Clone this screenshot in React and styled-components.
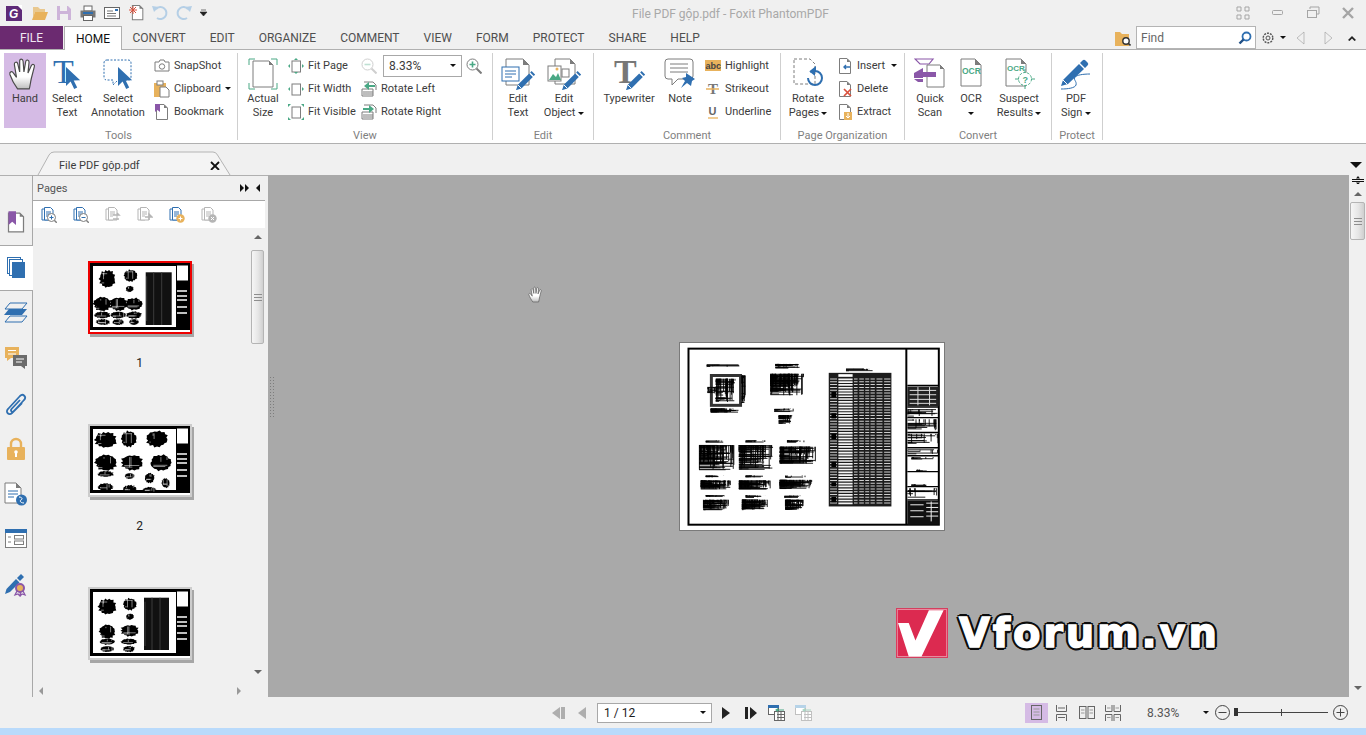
import React from 'react';
import styled, { createGlobalStyle } from 'styled-components';

const BLUE = '#2f6fb0';
const GREY = '#7d7d7d';
const ORANGE = '#e8b25c';
const PURPLE = '#8a57a8';
const GREEN = '#4aa885';

const GlobalStyle = createGlobalStyle`
  html, body {
    margin: 0;
    width: 1366px;
    height: 735px;
    overflow: hidden;
    background: #f0f0f0;
  }
  body {
    color: #3c3c3c;
    font-family: Roboto, "Liberation Sans", sans-serif;
    font-size: 11px;
  }
  * { box-sizing: border-box; }
  svg { display: block; flex: none; }
`;

const Window = styled.div`
  display: flex;
  flex-direction: column;
  height: 735px;
  overflow: hidden;
`;

const TitleBar = styled.div`
  align-items: center;
  display: flex;
  flex: 0 0 26px;
`;

const Qat = styled.div`
  align-items: center;
  display: flex;
  flex: 0 0 632px;
  gap: 8px;
  padding-left: 6px;
`;

const Title = styled.div`
  color: #a8a8a8;
  font-size: 12px;
  padding-top: 1px;
`;

const WinControls = styled.div`
  align-items: center;
  display: flex;
  gap: 21px;
  margin-left: auto;
  padding-right: 11px;
`;

const Slot = styled.div`
  align-items: center;
  display: flex;
  flex: none;
  margin-left: ${p => p.$ml || 0}px;
`;

const TabRow = styled.div`
  align-items: flex-start;
  display: flex;
  flex: 0 0 23px;
  font-size: 12px;
  min-height: 0;
  position: relative;
  z-index: 2;
`;

const FileTab = styled.div`
  align-items: center;
  background: #6b2a70;
  color: #f0e6f2;
  display: flex;
  height: 23px;
  justify-content: center;
  width: 63px;
`;

const HomeTab = styled.div`
  align-items: center;
  background: #fff;
  border: 1px solid #b0b0b0;
  border-bottom: 0;
  color: #111;
  display: flex;
  height: 24px;
  justify-content: center;
  margin-left: 1px;
  margin-right: -1.5px;
  width: 58px;
`;

const Tab = styled.div`
  align-items: center;
  color: #4f4f4f;
  display: flex;
  height: 23px;
  padding: 0 12px;
`;

const TabTools = styled.div`
  align-items: center;
  display: flex;
  height: 23px;
  margin-left: auto;
  padding-right: 9px;
`;

const FindBox = styled.div`
  align-items: center;
  background: #fff;
  border: 1px solid #b4b4b4;
  color: #666;
  display: flex;
  height: 23px;
  justify-content: space-between;
  margin-left: 5px;
  padding: 0 3px 0 4px;
  width: 120px;
`;

const Ribbon = styled.div`
  background: #fff;
  border-bottom: 1px solid #b0b0b0;
  border-top: 1px solid #b0b0b0;
  display: flex;
  flex: 0 0 95px;
  padding-top: 3px;
`;

const Group = styled.div`
  border-right: 1px solid #cfcfcf;
  display: flex;
  flex-direction: column;
  height: 87px;
  width: ${p => p.$w}px;
`;

const GroupBody = styled.div`
  display: flex;
  height: 75px;
  padding-left: ${p => p.$pad || 0}px;
`;

const GroupLabel = styled.div`
  color: #7f7f7f;
  height: 12px;
  line-height: 16px;
  text-align: center;
`;

const BigButton = styled.div`
  align-items: center;
  background: ${p => (p.$active ? '#d5bbe5' : 'transparent')};
  display: flex;
  flex: none;
  flex-direction: column;
  height: 75px;
  padding-top: 3px;
  width: ${p => p.$w}px;
`;

const BigLabel = styled.div`
  line-height: 14px;
  text-align: center;
  white-space: nowrap;
`;

const IconSlot = styled.div`
  align-items: center;
  display: flex;
  height: 36px;
  justify-content: center;
`;

// the big serif T needs room above its letter for the font's ascent
const TallIcon = styled.div`
  margin-top: -6px;
`;

const SmallCol = styled.div`
  display: flex;
  flex: none;
  flex-direction: column;
  margin-left: ${p => p.$ml || 0}px;
  padding-top: 1px;
  width: ${p => (p.$w ? `${p.$w}px` : 'auto')};
`;

const SmallRow = styled.div`
  align-items: center;
  display: flex;
  gap: 4px;
  height: 23px;
  white-space: nowrap;
`;

const Caret = styled.span`
  border-left: ${p => p.$s || 3}px solid transparent;
  border-right: ${p => p.$s || 3}px solid transparent;
  border-top: ${p => p.$s || 3}px solid ${p => p.$color || '#111'};
  display: inline-block;
  flex: none;
  margin-left: ${p => p.$ml || 0}px;
  vertical-align: middle;
`;

const ZoomCombo = styled.div`
  align-items: center;
  border: 1px solid #a8a8a8;
  display: flex;
  font-size: 12px;
  height: 22px;
  justify-content: space-between;
  margin-left: 2px;
  padding: 0 5px;
  width: 79px;
`;

const DocBand = styled.div`
  display: flex;
  flex: 0 0 31px;
  padding-left: 37px;
`;

const DocTab = styled.div`
  align-items: center;
  display: flex;
  height: 24px;
  justify-content: space-between;
  margin-top: 7px;
  padding: 4px 11px 0 22px;
  position: relative;
  width: 194px;
`;

const DocTabShape = styled.svg`
  left: 0;
  position: absolute;
  top: 0;
`;

const DocTabText = styled.span`
  position: relative;
`;

const BandCaret = styled.div`
  margin-left: auto;
  padding: 14px 4px 0 0;
`;

const Main = styled.div`
  display: flex;
  flex: 0 0 522px;
  min-height: 0;
  overflow: hidden;
`;

const Rail = styled.div`
  border-right: 1px solid #a8a8a8;
  border-top: 1px solid #b0b0b0;
  flex: 0 0 33px;
  padding-top: 24px;
`;

const RailItem = styled.div`
  align-items: center;
  background: ${p => (p.$active ? '#fff' : 'transparent')};
  border-bottom: 1px solid ${p => (p.$active ? '#a8a8a8' : 'transparent')};
  border-top: 1px solid ${p => (p.$active ? '#a8a8a8' : 'transparent')};
  display: flex;
  height: 45.25px;
  justify-content: center;
  margin-right: ${p => (p.$active ? -1 : 0)}px;
  position: relative;
`;

const Panel = styled.div`
  border-top: 1px solid #b0b0b0;
  display: flex;
  flex: 0 0 235px;
  flex-direction: column;
  min-height: 0;
  padding-right: 3px;
`;

const PanelHeader = styled.div`
  align-items: center;
  color: #555;
  display: flex;
  flex: 0 0 24px;
  padding: 0 5px 0 4px;
`;

const HeaderArrows = styled.div`
  align-items: center;
  display: flex;
  gap: 7px;
  margin-left: auto;
`;

const PanelToolbar = styled.div`
  align-items: center;
  background: #fff;
  border-top: 1px solid #a8a8a8;
  display: flex;
  flex: 0 0 28px;
  gap: 16px;
  padding-left: 8px;
`;

const PanelBody = styled.div`
  display: flex;
  flex: 1;
  min-height: 0;
`;

const ThumbList = styled.div`
  align-items: center;
  display: flex;
  flex: 1;
  flex-direction: column;
  min-height: 0;
  overflow: hidden;
  padding: 33px 4px 0 0;
`;

const ThumbItem = styled.div`
  align-items: center;
  display: flex;
  flex: 0 0 163px;
  flex-direction: column;
`;

const ThumbFrame = styled.div`
  background: #fff;
  border: 2px solid ${p => (p.$selected ? '#ee0000' : '#cccccc')};
  box-shadow: 2px 3px 0 #a6a6a6;
  height: 73px;
  width: 104px;
`;

const ThumbLabel = styled.div`
  color: #222;
  font-size: 12px;
  line-height: 14px;
  margin-top: 22px;
`;

const VScroll = styled.div`
  background: #f0f0f0;
  display: flex;
  flex: 0 0 ${p => p.$w}px;
  flex-direction: column;
  padding-bottom: ${p => p.$bottom || 0}px;
`;

const ScrollCell = styled.div`
  align-items: center;
  display: flex;
  flex: 0 0 ${p => p.$h || 18}px;
  justify-content: center;
  margin-top: ${p => (p.$end ? 'auto' : '0')};
`;

const ScrollThumb = styled.div`
  align-items: center;
  background: linear-gradient(90deg, #f6f6f6 0%, #e6e6e6 55%, #cfcfcf 100%);
  border: 1px solid #b4b4b4;
  border-radius: 2px;
  display: flex;
  height: ${p => p.$h}px;
  justify-content: center;
  margin: ${p => p.$top}px 1px 0;
`;

const Grip = styled.div`
  background: #8e8e8e;
  box-shadow: 0 3px #8e8e8e, 0 -3px #8e8e8e;
  height: 1px;
  width: 8px;
`;

const HScroll = styled.div`
  align-items: center;
  display: flex;
  flex: 0 0 13px;
  justify-content: space-between;
  padding: 0 24px 0 6px;
`;

const Canvas = styled.div`
  align-items: center;
  background: #a9a9a9;
  display: flex;
  flex: 0 0 1081px;
  justify-content: center;
  padding-left: 7px;
  position: relative;
`;

const Sheet = styled.div`
  background: #fff;
  box-shadow: 0 0 0 1px #7a7a7a;
  height: 187px;
  width: 264px;
`;

const SplitDots = styled.div`
  background-image: radial-gradient(#7d7d7d 0.7px, transparent 0.8px);
  background-size: 3px 3px;
  height: 42px;
  left: 1px;
  position: absolute;
  top: 201px;
  width: 6px;
`;

const CursorSpot = styled.div`
  left: 260px;
  position: absolute;
  top: 111px;
`;

const Watermark = styled.div`
  align-items: center;
  display: flex;
  gap: 11px;
  left: 628px;
  position: absolute;
  top: 433px;
`;

const WatermarkText = styled.div`
  -webkit-text-stroke: 1.4px #fff;
  color: #fff;
  font-family: "DejaVu Sans", sans-serif;
  font-size: 40px;
  font-weight: 700;
  letter-spacing: 2.8px;
  line-height: 44px;
  text-shadow:
    3px 0 0 #0c0c0c, -3px 0 0 #0c0c0c, 0 3px 0 #0c0c0c, 0 -3px 0 #0c0c0c,
    2px 2px 0 #0c0c0c, -2px 2px 0 #0c0c0c, 2px -2px 0 #0c0c0c, -2px -2px 0 #0c0c0c;
`;

const StatusBar = styled.div`
  align-items: center;
  display: flex;
  flex: 0 0 31px;
  padding: 0 18px 0 552px;
`;

const PageCombo = styled.div`
  align-items: center;
  background: #fff;
  border: 1px solid #a8a8a8;
  color: #1c1c1c;
  display: flex;
  font-size: 12px;
  height: 20px;
  justify-content: space-between;
  margin-left: 10px;
  padding: 0 5px 0 6px;
  width: 115px;
`;

const StatusRight = styled.div`
  align-items: center;
  display: flex;
  margin-left: auto;
`;

const ViewModes = styled.div`
  display: flex;
  gap: 2.3px;
`;

const ViewMode = styled.div`
  align-items: center;
  background: ${p => (p.$active ? '#d5bbe5' : 'transparent')};
  display: flex;
  height: 20px;
  justify-content: center;
  width: 23px;
`;

const ZoomValue = styled.div`
  color: #555;
  font-size: 12px;
  margin-left: 23px;
  width: 56px;
`;

const Slider = styled.div`
  background: #444;
  height: 1px;
  margin: 0 5px 0 4px;
  position: relative;
  width: 94px;
`;

const SliderHandle = styled.div`
  background: #333;
  height: 8px;
  left: 0;
  position: absolute;
  top: -4px;
  width: 4px;
`;

const SliderTick = styled.div`
  background: #444;
  height: 7px;
  left: 47px;
  position: absolute;
  top: -3px;
  width: 1px;
`;

const AccentBar = styled.div`
  background: #b9dafb;
  flex: 0 0 7px;
`;

/* ---------- icon helpers ---------- */

const Svg = ({ w = 16, h, vb, children }) => (
  <svg width={w} height={h || w} viewBox={vb || `0 0 ${w} ${h || w}`} fill="none">
    {children}
  </svg>
);

// document with a folded corner, in a 16 wide, 16 high box
const Doc = ({ x = 0, y = 0, s = 1, stroke = GREY, fold = GREY, fill = '#fff', dash }) => (
  <g transform={`translate(${x} ${y}) scale(${s})`}>
    <path
      d="M2.5 .5h7.5l3.5 3.5v11.5h-11z"
      fill={fill}
      stroke={stroke}
      strokeWidth={1 / s}
      strokeDasharray={dash}
    />
    <path d="M10 .5l3.5 3.5h-3.5z" fill={fold} />
  </g>
);

const Pencil = ({ x, y, s = 1, color = BLUE }) => (
  <g transform={`translate(${x} ${y}) scale(${s})`}>
    <path d="M0 16l1.5-4.5 9.5-9.5 3 3-9.5 9.5z" fill={color} />
    <path d="M11.8 1.2l1.2-1.2 3 3-1.2 1.2z" fill={color} />
    <path d="M1.5 11.5l3 3" stroke="#fff" strokeWidth=".8" />
  </g>
);

const Arrow = ({ x, y, s = 1, color = BLUE }) => (
  <path
    transform={`translate(${x} ${y}) scale(${s})`}
    d="M0 0v19l4.6-4.6 3.6 7.6 3-1.6-3.5-7 6.5-.2z"
    fill={color}
  />
);

const HandIcon = ({ size = 34, grad = 'hand' }) => (
  <Svg w={size} vb="0 0 32 32">
    <defs>
      <linearGradient id={grad} x1="0" y1="0" x2="0" y2="1">
        <stop offset="0" stopColor="#fff" />
        <stop offset=".6" stopColor="#fff" />
        <stop offset="1" stopColor="#bdbdbd" />
      </linearGradient>
    </defs>
    <path
      d="M9 30C6 26 3 20 1.800 16.500 1 13.800 3.800 13 5 15l3 4.200L6 7.200C5.600 4.600 8.600 4 9.200 6.500L11 14V4c0-2.600 3-2.600 3.200 0L15 14l1.600-9.500c.5-2.500 3.400-2 3.200.5l-1 10 3.200-7c1-2 3.500-1 2.800 1L22 20c-1 4-1 7-2 10z"
      fill={`url(#${grad})`}
      stroke="#4a4a4a"
      strokeWidth="1.100"
    />
  </Svg>
);

const SelectTextIcon = () => (
  <TallIcon>
    <Svg w={30} h={38} vb="0 -6 30 38">
      <text x="1" y="25" fontFamily="Liberation Serif" fontSize="34" fill={BLUE}>T</text>
      <Arrow x={14} y={9} />
    </Svg>
  </TallIcon>
);

const SelectAnnotIcon = () => (
  <Svg w={30} h={32}>
    <path
      d="M4 2h21q3 0 3 3v14q0 3-3 3H15l-5 5v-5H4q-3 0-3-3V5q0-3 3-3z"
      stroke={BLUE}
      strokeDasharray="2 1.500"
    />
    <Arrow x={15} y={9} />
  </Svg>
);

const ActualSizeIcon = () => (
  <Svg w={30} h={32}>
    <path d="M1 7V1h6M23 1h6v6M1 25v6h6M23 31h6v-6" stroke={GREEN} />
    <path d="M5 3h16l4 4v22H5z" fill="#fff" stroke={GREY} />
    <path d="M21 3l4 4h-4z" fill={GREY} />
  </Svg>
);

const EditTextIcon = () => (
  <Svg w={34} h={32}>
    <path d="M5 1h17l6 6v20H5z" fill="#fff" stroke={GREY} />
    <path d="M22 1l6 6h-6z" fill={GREY} />
    <rect x="1" y="9" width="17" height="14" fill="#fff" stroke={BLUE} />
    <path d="M4 13h11M4 16h11M4 19h7" stroke={BLUE} />
    <Pencil x={15} y={13} s={1.200} />
  </Svg>
);

const EditObjectIcon = () => (
  <Svg w={34} h={32}>
    <path d="M8 1h15l5 5v20H8z" fill="#fff" stroke={GREY} />
    <path d="M23 1l5 5h-5z" fill={GREY} />
    <rect x="1" y="8" width="13" height="15" fill="#fff" stroke={GREY} />
    <path d="M2 22l4-6 3 3 2-4 3 7z" fill={GREEN} />
    <circle cx="10" cy="11" r="1.500" fill={ORANGE} />
    <rect x="15" y="11" width="7" height="8" fill="#fff" stroke={GREY} />
    <Pencil x={15} y={13} s={1.200} />
  </Svg>
);

const TypewriterIcon = () => (
  <TallIcon>
    <Svg w={32} h={38} vb="0 -6 32 38">
      <text x="1" y="25" fontFamily="Liberation Serif" fontWeight="700" fontSize="34" fill="#777">T</text>
      <Pencil x={13} y={13} s={1.200} />
    </Svg>
  </TallIcon>
);

const NoteIcon = () => (
  <Svg w={32} h={32}>
    <path d="M4 1h22q3 0 3 3v14q0 3-3 3H14l-6 6v-6H4q-3 0-3-3V4q0-3 3-3z" fill="#fff" stroke={GREY} />
    <path d="M6 6h18M6 10h18M6 14h18" stroke={GREY} />
    <path d="M22 15l9 6-3 2-1 5-4-3-6 5 4-7-3-3 4-1z" fill={BLUE} />
  </Svg>
);

const RotatePagesIcon = () => (
  <Svg w={32} h={32}>
    <path d="M2 1h16l5 5v20H2z" stroke={GREY} strokeDasharray="3 2" />
    <path d="M18 14l5-4v3a7 7 0 1 1-7 7" stroke={BLUE} strokeWidth="2" />
    <path d="M18 14l5 4v-8z" fill={BLUE} />
  </Svg>
);

const QuickScanIcon = () => (
  <Svg w={32} h={32}>
    <path d="M1 1h18l-4 5H6z" stroke={PURPLE} strokeWidth="1.200" />
    <path d="M13 7h13l4 4v18H13z" fill="#fff" stroke={GREY} />
    <path d="M26 7l4 4h-4z" fill={GREY} />
    <path d="M9 10L0 15v5h9z" fill={PURPLE} />
    <rect x="9" y="14" width="13" height="5" fill={PURPLE} />
    <path d="M0 21h9v3H4z" fill={PURPLE} />
  </Svg>
);

const OcrIcon = () => (
  <Svg w={24} h={32}>
    <path d="M2 1h14l6 6v21H2z" fill="#fff" stroke={GREY} />
    <path d="M16 1l6 6h-6z" fill={GREY} />
    <text x="3" y="16" fontFamily="Liberation Sans" fontWeight="700" fontSize="8.500" fill={GREEN}>OCR</text>
  </Svg>
);

const SuspectIcon = () => (
  <Svg w={34} h={32}>
    <path d="M4 1h15l5 5v22H4z" fill="#fff" stroke={GREY} />
    <path d="M19 1l5 5h-5z" fill={GREY} />
    <text x="5" y="13" fontFamily="Liberation Sans" fontWeight="700" fontSize="8" fill={GREEN}>OCR</text>
    <circle cx="23" cy="21" r="6.500" fill="#fff" stroke={GREEN} strokeDasharray="2.500 1.500" />
    <path d="M23 11v4M23 27v4M13 21h4M29 21h4" stroke={GREEN} />
    <text x="20.500" y="24.500" fontFamily="Liberation Sans" fontWeight="700" fontSize="9" fill={GREEN}>?</text>
  </Svg>
);

const PdfSignIcon = () => (
  <Svg w={32} h={32}>
    <path d="M1 28l2-6L19 6l5 5L8 26z" fill={BLUE} />
    <path d="M20 5l2.500-2.500a2 2 0 0 1 3 0l2 2a2 2 0 0 1 0 3L25 10z" fill={BLUE} />
    <path d="M3 22l4 4" stroke="#fff" />
    <path d="M1 31c7 0 14-1 15-4 1-4-3-5-1-8 2-2 8-3 15-3" stroke={BLUE} />
  </Svg>
);

const SnapShotIcon = () => (
  <Svg>
    <path d="M1 4h4l1-2h4l1 2h4v9H1z" fill="#fff" stroke={GREY} />
    <circle cx="8" cy="8.500" r="2.700" stroke={GREY} />
  </Svg>
);

const ClipboardIcon = () => (
  <Svg w={16} h={18}>
    <path d="M0 3h12v14H0z" fill={ORANGE} />
    <rect x="3" y="1" width="6" height="4" fill="#fff" stroke={GREY} />
    <path d="M6 7h6l3 3v7H6z" fill="#fff" stroke={GREY} />
  </Svg>
);

const BookmarkIcon = () => (
  <Svg>
    <Doc />
    <path d="M1 0h5v8l-2.500-2L1 8z" fill={PURPLE} />
  </Svg>
);

const FitIcon = ({ kind }) => (
  <Svg>
    <rect x="4" y="3" width="8.500" height="11" fill="#fff" stroke={GREY} />
    {kind === 'page' && <path d="M8 0l2 2H6zM8 16l2-2H6zM0 8l2-2v4zM16 8l-2-2v4z" fill={GREEN} />}
    {kind === 'width' && <path d="M0 8l2-2v4zM16 8l-2-2v4z" fill={GREEN} />}
    {kind === 'visible' && <path d="M0 0h3L0 3zM16 0h-3l3 3zM0 16h3l-3-3zM16 16h-3l3-3z" fill={GREEN} />}
  </Svg>
);

const ZoomIcon = ({ sign, pale }) => {
  const lens = pale ? '#cfcfcf' : GREY;
  const mark = pale ? '#bfe0d3' : GREEN;
  return (
    <Svg>
      <circle cx="6.500" cy="6.500" r="5.500" fill="#fff" stroke={lens} />
      <path d="M10.500 10.500L15.500 15.500" stroke={lens} strokeWidth="2" />
      <path d={sign === '+' ? 'M3.500 6.500h6M6.500 3.500v6' : 'M3.500 6.500h6'} stroke={mark} strokeWidth="1.600" />
    </Svg>
  );
};

const RotateIcon = ({ flip }) => (
  <Svg>
    <path d="M3 1h9l3 3v5M1 8h11v7H1z" fill="#fff" stroke={GREY} />
    <path d="M3 10v4M5 10v4M7 10v4M9 10v4M11 10v4" stroke={GREY} />
    <path d={flip ? 'M2 4h6V1l5 4-5 4V6H2z' : 'M14 4H8V1L3 5l5 4V6h6z'} fill={GREEN} />
  </Svg>
);

const HighlightIcon = () => (
  <Svg>
    <rect y="2" width="16" height="11" fill={ORANGE} />
    <text x=".5" y="11" fontFamily="Liberation Sans" fontWeight="700" fontSize="9" fill="#444">abc</text>
  </Svg>
);

const StrikeoutIcon = () => (
  <Svg>
    <text x="3" y="13" fontFamily="Liberation Serif" fontWeight="700" fontSize="15" fill="#777">T</text>
    <path d="M1 8h13" stroke={ORANGE} strokeWidth="1.500" />
  </Svg>
);

const UnderlineIcon = () => (
  <Svg>
    <text x="3.500" y="11" fontFamily="Liberation Sans" fontWeight="700" fontSize="11" fill="#666">U</text>
    <path d="M3 14h10" stroke={ORANGE} strokeWidth="1.300" />
  </Svg>
);

const InsertIcon = () => (
  <Svg>
    <Doc />
    <path d="M13 9H7M9 7l-2 2 2 2" stroke={BLUE} strokeWidth="1.400" />
  </Svg>
);

const DeleteIcon = () => (
  <Svg>
    <Doc />
    <path d="M7 8l7 7M14 8l-7 7" stroke="#d9503c" strokeWidth="1.700" />
  </Svg>
);

const ExtractIcon = () => (
  <Svg>
    <Doc />
    <rect x="7" y="8" width="8" height="8" fill={ORANGE} />
    <path d="M11 9v5M9 12l2 2 2-2" stroke="#fff" />
  </Svg>
);

const CollapseIcon = () => (
  <Svg w={10} h={8}>
    <path d="M1 6l4-4 4 4-1.500 1L5 4.500 2.500 7z" fill="#222" />
  </Svg>
);

const GearIcon = () => (
  <Svg w={14}>
    <circle cx="7" cy="7" r="4.800" stroke="#555" strokeWidth="1.400" strokeDasharray="2 1" />
    <circle cx="7" cy="7" r="2" stroke="#555" />
  </Svg>
);

const FindFolderIcon = () => (
  <Svg>
    <path d="M0 2h5l2 2h7v12H0z" fill={ORANGE} />
    <circle cx="11" cy="11" r="3.200" fill="#fff" stroke="#333" strokeWidth="1.400" />
    <path d="M13.500 13.500l2 2" stroke="#333" strokeWidth="1.600" />
  </Svg>
);

const FindLens = () => (
  <Svg w={14}>
    <circle cx="8.500" cy="5.500" r="4" stroke={BLUE} strokeWidth="1.800" />
    <path d="M5.500 8.500L1.500 12.500" stroke="#1f4f86" strokeWidth="2.400" />
  </Svg>
);

const Triangle = ({ dir, w = 9, h = 14, color = '#c8c8c8' }) => (
  <Svg w={w} h={h}>
    <path
      d={dir === 'left' ? `M${w - 1} 1L1 ${h / 2}l${w - 2} ${h / 2 - 1}z` : `M1 1l${w - 2} ${h / 2 - 1}L1 ${h - 1}z`}
      fill={color}
      stroke="#9a9a9a"
      strokeWidth=".6"
    />
  </Svg>
);

const TinyArrow = ({ dir, color = '#666', s = 3 }) => {
  const pts = {
    up: `M0 ${s}h${s * 2}L${s} 0z`,
    down: `M0 0h${s * 2}L${s} ${s}z`,
    left: `M${s} 0v${s * 2}L0 ${s}z`,
    right: `M0 0v${s * 2}L${s} ${s}z`,
  };
  const vertical = dir === 'up' || dir === 'down';
  return (
    <Svg w={vertical ? s * 2 : s} h={vertical ? s : s * 2}>
      <path d={pts[dir]} fill={color} />
    </Svg>
  );
};

const DocStack = ({ stroke = BLUE, children }) => (
  <Svg>
    <path d="M1 2h7v11H1z" fill="#fff" stroke={stroke} />
    <path d="M3.500 .5h6l2.500 2.500v10H3.500z" fill="#fff" stroke={stroke} />
    <path d="M5 5h5M5 7h5M5 9h3" stroke={stroke} />
    {children}
  </Svg>
);

const ZoomBadge = ({ sign }) => (
  <g>
    <circle cx="10.500" cy="10.500" r="4" fill="#fff" stroke={GREY} />
    <path d="M13.500 13.500l2.300 2.300" stroke={GREY} strokeWidth="1.400" />
    <path d={sign === '+' ? 'M8.500 10.500h4M10.500 8.500v4' : 'M8.500 10.500h4'} stroke={BLUE} />
  </g>
);

const CircleBadge = ({ color, x }) => (
  <g>
    <circle cx="11.500" cy="11.500" r="4.200" fill={color} />
    <path d={x ? 'M10 10l3 3M13 10l-3 3' : 'M9.500 11.500h4M11.500 9.500v4'} stroke="#fff" />
  </g>
);

/* ---------- rail icons ---------- */

const RailBookmark = () => (
  <Svg w={20} h={24} vb="0 0 16 19">
    <path d="M2 1.500h9l3 3v12H2z" fill="#fff" stroke={GREY} />
    <path d="M11 1.500l3 3h-3z" fill={GREY} />
    <path d="M2 0h6v11L5 8.500 2 11z" fill={PURPLE} />
  </Svg>
);

const RailPages = () => (
  <Svg w={20} h={22}>
    <rect x=".5" y=".5" width="13" height="16" fill="#fff" stroke={BLUE} />
    <rect x="2.500" y="2.500" width="13" height="16" fill="#fff" stroke={BLUE} />
    <rect x="5" y="5" width="13" height="16" fill={BLUE} />
  </Svg>
);

const RailLayers = () => (
  <Svg w={24} h={22}>
    <path d="M6 1h17l-5 6H1z" stroke={BLUE} />
    <path d="M5 7h18l-5 6H0z" fill={BLUE} />
    <path d="M6 14h17l-5 6H1z" stroke={BLUE} />
  </Svg>
);

const RailComments = () => (
  <Svg w={24} h={24}>
    <path d="M1 1h14v11H7l-4 3v-3H1z" fill={ORANGE} />
    <path d="M4 4.500h8M4 8h8" stroke="#fff" />
    <path d="M9 9h14v11h-2v3l-4-3H9z" fill="#6b6b6b" />
    <path d="M12 13h8M12 16h6" stroke="#fff" />
  </Svg>
);

const RailClip = () => (
  <Svg w={22} h={24}>
    <path
      d="M15 8L6.500 17C5 19 7.500 21 9 19L19 8C22 5 18 1 15 4L3 17C0 20 4 24 7 21L17 11"
      stroke={BLUE}
      strokeWidth="1.800"
    />
  </Svg>
);

const RailLock = () => (
  <Svg w={20} h={24}>
    <path d="M5 11V7a5 5 0 0 1 10 0v4" stroke={ORANGE} strokeWidth="2.400" />
    <rect x="1" y="10" width="18" height="13" rx="1" fill={ORANGE} />
    <circle cx="10" cy="15" r="1.800" fill="#fff" />
    <rect x="9" y="15" width="2" height="5" fill="#fff" />
  </Svg>
);

const RailDocGlobe = () => (
  <Svg w={24} h={24}>
    <path d="M1 1h11l5 5v15H1z" fill="#fff" stroke={GREY} />
    <path d="M12 1l5 5h-5z" fill={GREY} />
    <path d="M4 9h10M4 12h10M4 15h6" stroke={BLUE} />
    <circle cx="17.500" cy="18" r="5.500" fill={BLUE} />
    <path d="M15 15c3 0 4 2 2 3s0 3 3 3" stroke="#fff" />
  </Svg>
);

const RailForm = () => (
  <Svg w={22} h={20}>
    <rect x=".5" y=".5" width="21" height="18" fill="#fff" stroke={GREY} />
    <rect width="22" height="4" fill={BLUE} />
    <path d="M3 8h3M3 13h3" stroke={GREY} />
    <rect x="9.500" y="6.500" width="9" height="3.500" stroke={GREY} />
    <rect x="9.500" y="12" width="9" height="3.500" stroke={GREY} />
  </Svg>
);

const RailSign = () => (
  <Svg w={22} h={24}>
    <path d="M0 21l1.500-5L11 6l3.500 3.500L5 19z" fill={BLUE} />
    <path d="M12 5l4-4 3 3-4 4z" fill={BLUE} />
    <circle cx="15" cy="15" r="4" fill={ORANGE} stroke={PURPLE} strokeWidth="2" />
    <path d="M12 18l-2 4 3-1 2 2 .5-4M18 18l2 4-3-1-2 2" stroke={PURPLE} strokeWidth="1.300" />
  </Svg>
);

/* ---------- status bar icons ---------- */

const NavIcon = ({ kind, muted }) => {
  const fill = muted ? '#aeaeae' : '#222';
  const paths = {
    first: 'M0 7l8-6v12zM9 1h4v12H9z',
    prev: 'M1 7l8-6v12z',
    next: 'M1 1l8 6-8 6z',
    last: 'M0 1h3v12H0zM5 1l7 6-7 6z',
  };
  const width = { first: 14, prev: 10, next: 10, last: 13 }[kind];
  return (
    <Svg w={width} h={14}>
      <path d={paths[kind]} fill={fill} />
    </Svg>
  );
};

const TableArrowIcon = ({ muted }) => {
  const line = muted ? '#c0c0c0' : '#666';
  const head = muted ? '#b6d3e8' : BLUE;
  const arrow = muted ? '#a9d6c4' : GREEN;
  return (
    <Svg w={17} h={16}>
      <rect x=".5" y=".5" width="10" height="9" fill="#fff" stroke={line} />
      <rect width="11" height="3" fill={head} />
      <rect x="6.500" y="6.500" width="10" height="9" fill="#fff" stroke={line} />
      <path d="M9 9.500h7M9 12.500h7M10 7v8M13 7v8" stroke={line} />
      <path d="M10 3l-3 2 3 2zM10 4.500h6v1h-6z" fill={arrow} />
    </Svg>
  );
};

const SinglePageIcon = () => (
  <Svg w={12} h={15}>
    <rect x=".5" y=".5" width="10" height="14" stroke="#666" />
    <path d="M2.500 4h6M2.500 7h6M2.500 10h6" stroke="#999" />
  </Svg>
);

const ContinuousIcon = () => (
  <Svg w={12} h={16}>
    <path d="M.5 0v6.500h10V0M2 3h7" stroke="#666" />
    <path d="M.5 16V9.500h10V16M2 12.500h7" stroke="#666" />
  </Svg>
);

const FacingIcon = () => (
  <Svg w={16} h={13}>
    <rect x=".5" y=".5" width="6.500" height="12" stroke="#666" />
    <rect x="9" y=".5" width="6.500" height="12" stroke="#666" />
    <path d="M2 4h3.500M2 7h3.500M10.500 4h3.500M10.500 7h3.500" stroke="#999" />
  </Svg>
);

const ContFacingIcon = () => (
  <Svg w={16} h={16}>
    <path d="M.5 0v6.500h6.500V0M9 0v6.500h6.500V0M.5 16V9.500h6.500V16M9 16V9.500h6.500V16" stroke="#666" />
    <path d="M2 3h3.500M10.500 3h3.500M2 12.500h3.500M10.500 12.500h3.500" stroke="#999" />
  </Svg>
);

const RoundSign = ({ plus }) => (
  <Svg w={15}>
    <circle cx="7.500" cy="7.500" r="7" stroke="#444" />
    <path d={plus ? 'M3.500 7.500h8M7.500 3.500v8' : 'M3.500 7.500h8'} stroke="#444" />
  </Svg>
);

/* ---------- the drawings on the pages ---------- */

function makeRandom(seed) {
  let value = seed;
  return () => {
    value = (value * 16807) % 2147483647;
    return value / 2147483647;
  };
}

// many short lines in a box, reads as a tiny technical drawing
function scribble([x, y, w, h], seed, count = 30) {
  const rand = makeRandom(seed * 7919 + 11);
  let d = '';
  for (let i = 0; i < count; i++) {
    const px = x + rand() * w;
    const py = y + rand() * h;
    if (i % 2) d += `M${x} ${py.toFixed(1)}h${(rand() * w).toFixed(1)}`;
    else d += `M${px.toFixed(1)} ${y}v${(rand() * h).toFixed(1)}`;
  }
  return d;
}

function blob([cx, cy, rx, ry], seed) {
  const rand = makeRandom(seed * 4801 + 3);
  const pts = [];
  for (let i = 0; i < 28; i++) {
    const a = (i / 28) * Math.PI * 2;
    const k = i % 2 ? 0.82 + rand() * 0.14 : 0.92 + rand() * 0.2;
    pts.push(`${(cx + Math.cos(a) * rx * k).toFixed(1)},${(cy + Math.sin(a) * ry * k).toFixed(1)}`);
  }
  return pts.join(' ');
}

const MAIN_DRAWINGS = [
  [135, 130, 60, 70, 70], [110, 155, 30, 20, 24], [120, 220, 85, 12, 30], [213, 120, 12, 90, 24],
  [108, 88, 110, 6, 14], [300, 115, 100, 65, 130], [315, 85, 75, 14, 24], [325, 240, 40, 25, 48],
  [312, 220, 65, 10, 16], [85, 330, 105, 75, 110], [205, 330, 105, 75, 110], [328, 335, 108, 52, 100],
  [105, 316, 60, 6, 10], [225, 316, 60, 6, 10], [350, 316, 55, 6, 10], [90, 437, 90, 26, 80],
  [205, 437, 95, 26, 80], [328, 435, 98, 26, 70], [105, 422, 60, 6, 10], [225, 422, 60, 6, 10],
  [345, 422, 60, 6, 10], [98, 495, 76, 30, 80], [214, 495, 78, 30, 80], [345, 495, 55, 30, 70],
  [105, 482, 60, 6, 10], [225, 482, 60, 6, 10], [342, 482, 60, 6, 10], [528, 100, 85, 6, 12],
  [714, 222, 92, 24, 16], [714, 252, 92, 36, 24], [714, 296, 92, 34, 20], [714, 344, 92, 14, 10],
  [725, 366, 80, 6, 8], [740, 404, 40, 6, 6], [725, 448, 60, 6, 6], [714, 460, 92, 30, 18],
];

const TABLE_COLS = [[480, 501], [552, 563], [568, 582], [586, 598], [602, 615], [620, 638], [643, 662]];
const TABLE_ROWS = Array.from({ length: 45 }, (_, i) => 129 + i * 8.5);

const MainDrawing = () => (
  <svg width="264" height="187" viewBox="28 22 795 564">
    <rect x="53" y="39" width="755" height="531" fill="none" stroke="#000" strokeWidth="6" />
    <path d="M710 39v531" stroke="#000" strokeWidth="6" />
    <rect x="122" y="120" width="88" height="90" fill="none" stroke="#333" strokeWidth="9" />
    <path
      d={MAIN_DRAWINGS.map(([x, y, w, h, n], i) => scribble([x, y, w, h], i + 1, n)).join('')}
      stroke="#000"
      strokeWidth="2.600"
    />
    <rect x="476" y="112" width="189" height="403" fill="#1c1c1c" />
    <rect x="505" y="116" width="43" height="8" fill="#fff" />
    <path d={TABLE_ROWS.map(y => `M505 ${y}H548V${y + 5}H505z`).join('')} fill="#f2f2f2" />
    <path
      d={TABLE_ROWS.flatMap(y => TABLE_COLS.map(([a, b]) => `M${a} ${y}H${b}V${y + 3}H${a}z`)).join('')}
      fill="#cfcfcf"
    />
    <path d="M484 170h14v16h-14zM484 234h14v16h-14zM484 296h14v16h-14zM484 380h14v16h-14zM484 442h14v12h-14zM484 486h14v16h-14z" fill="#000" />
    <path d="M713 150h95M713 215h95M713 247h95M713 292h95M713 338h95M713 362h95M713 410h95M713 455h95M713 495h95" stroke="#000" strokeWidth="4" />
    <rect x="713" y="153" width="95" height="60" fill="#222" />
    <path d="M720 165h80M720 178h80M720 192h80M720 204h80M745 155v55M780 155v55" stroke="#ddd" strokeWidth="3" />
    <rect x="713" y="497" width="95" height="73" fill="#111" />
    <path d="M770 505h36M770 518h36M770 531h36M770 544h36M722 510h40M722 528h40M722 546h40M785 500v60" stroke="#eee" strokeWidth="3" />
  </svg>
);

// the third thumbnail's number lies below the visible part of the list
const THUMBS = [
  {
    label: '1',
    selected: true,
    table: [57.7, 11.3, 26, 52.7],
    blobs: [
      [19.3, 18, 8, 9], [42.7, 14.7, 7, 6], [41.7, 28, 4, 3], [14.3, 43, 9, 7], [30.3, 43, 9, 7],
      [46, 43, 9, 6], [14.3, 54, 8, 3.5], [30.3, 54, 8, 3.5], [46, 54, 8, 3.5], [15, 61, 7, 3],
      [30.3, 61, 6, 3], [46, 61, 5, 3],
    ],
  },
  {
    label: '2',
    blobs: [
      [17.7, 16, 11, 8], [41, 15, 8, 8], [69, 15, 11, 8], [18, 38.7, 11, 8], [44, 38.7, 11, 8],
      [73, 38.7, 11, 8], [17.7, 50, 8, 3], [41.7, 52, 5, 3], [61.7, 54, 5, 5], [77.7, 59, 4, 5],
      [17.7, 63, 8, 4], [41.7, 65, 7, 4], [61.7, 66, 7, 3],
    ],
  },
  {
    table: [56, 10.7, 25, 52.3],
    blobs: [
      [19.3, 19.7, 9, 8], [42, 17.3, 7, 6], [42, 29.7, 4, 3], [19.3, 44.7, 8, 7], [41.7, 43.7, 9, 6],
      [19.3, 54.7, 8, 3], [41, 54.7, 8, 3], [19.3, 62, 7, 3], [41, 62, 6, 3],
    ],
  },
];

const ThumbDrawing = ({ blobs, table }) => (
  <svg width="100" height="69" viewBox="2 2 100 69">
    <rect x="3.500" y="3.500" width="97" height="64" fill="#fff" stroke="#000" strokeWidth="3" />
    {blobs.map((b, i) => (
      <polygon key={i} points={blob(b, i + 1)} fill="#000" />
    ))}
    <path
      d={blobs.map(([x, y, rx, ry], i) => scribble([x - rx * 0.7, y - ry * 0.7, rx * 1.4, ry * 1.4], i + 3, 4)).join('')}
      stroke="#fff"
      strokeWidth=".5"
    />
    {table && <rect x={table[0]} y={table[1]} width={table[2]} height={table[3]} fill="#111" />}
    {table && (
      <path
        d={`M${table[0] + 1} ${table[1] + 4}v${table[3] - 8}M${table[0] + 8} ${table[1]}v${table[3]}M${table[0] + 16} ${table[1]}v${table[3]}`}
        stroke="#3c3c3c"
      />
    )}
    <rect x="88" y="5" width="12" height="61" fill="#000" />
    <rect x="89" y="4.500" width="11" height="15" fill="#fff" />
    <path d="M89 30h10M89 35h10M89 39h10M89 46h10M89 52h10" stroke="#fff" strokeWidth="1.300" />
  </svg>
);

const VforumLogo = () => (
  <Svg w={52} h={50} vb="0 0 155 148">
    <rect width="155" height="148" fill="#dc2a50" />
    <rect x="4" y="4" width="147" height="140" stroke="#e88ca0" strokeWidth="3" />
    <path d="M6 44h32l20 52 40-90h44l-66 138H38z" fill="#fff" />
  </Svg>
);

/* ---------- data ---------- */

const TABS = ['CONVERT', 'EDIT', 'ORGANIZE', 'COMMENT', 'VIEW', 'FORM', 'PROTECT', 'SHARE', 'HELP'];

const Big = ({ w, active, icon, children }) => (
  <BigButton $w={w} $active={active}>
    <IconSlot>{icon}</IconSlot>
    <BigLabel>{children}</BigLabel>
  </BigButton>
);

const Small = ({ icon, label, caretGap }) => (
  <SmallRow>
    {icon}
    {label}
    {caretGap !== undefined && <Caret $ml={caretGap} />}
  </SmallRow>
);

const ScrollBar = ({ width, top, thumbTop, thumbHeight, bottom }) => (
  <VScroll $w={width} $bottom={bottom}>
    {top}
    <ScrollCell $h={thumbTop.cell}>
      <TinyArrow dir="up" s={4} />
    </ScrollCell>
    <ScrollThumb $h={thumbHeight} $top={thumbTop.gap}>
      <Grip />
    </ScrollThumb>
    <ScrollCell $end>
      <TinyArrow dir="down" s={4} />
    </ScrollCell>
  </VScroll>
);

export default function App() {
  return (
    <Window>
      <GlobalStyle />

      <TitleBar>
        <Qat>
          <Svg>
            <rect y="1" width="16" height="15" fill="#5e2a78" />
            <path d="M11 0l5 5V0z" fill="#fff" />
            <text x="3" y="13" fontFamily="Liberation Sans" fontWeight="700" fontStyle="italic" fontSize="12" fill="#fff">G</text>
          </Svg>
          <Slot $ml={2}>
            <Svg>
              <path d="M1 2h5l2 2h5v3H3L1 13z" fill="#e9c88f" />
              <path d="M3 7h13l-3 8H0z" fill={ORANGE} />
            </Svg>
          </Slot>
          <Svg>
            <path d="M1 1h11l3 3v11H1z" fill="#cdb4d9" />
            <rect x="4" y="1" width="7" height="5" fill="#f0f0f0" />
            <rect x="4" y="9" width="8" height="6" fill="#f0f0f0" />
          </Svg>
          <Svg>
            <rect x="4" y="1" width="8" height="5" fill="#fff" stroke="#666" />
            <rect x=".5" y="5.500" width="15" height="7" fill="#777" />
            <rect x="3" y="7" width="10" height="2" fill={BLUE} />
            <rect x="3.500" y="10.500" width="9" height="5" fill="#fff" stroke="#666" />
          </Svg>
          <Svg>
            <rect x=".5" y="2.500" width="15" height="11" fill="#fff" stroke="#666" />
            <path d="M3 6h6M3 8.500h9M3 11h9" stroke="#777" />
            <rect x="11" y="4" width="3" height="2" fill={BLUE} />
          </Svg>
          <Svg>
            <Doc x={2} y={0} s={0.95} />
            <path d="M5 1v8M1 5h8M2 2l6 6M8 2l-6 6" stroke="#d9503c" />
          </Svg>
          <Svg>
            <path d="M4 4a6 6 0 1 1 1 9" stroke="#b5cfe6" strokeWidth="2" />
            <path d="M0 1l7 1-5 5z" fill="#b5cfe6" />
          </Svg>
          <Svg>
            <path d="M12 4a6 6 0 1 0-1 9" stroke="#b5cfe6" strokeWidth="2" />
            <path d="M16 1l-7 1 5 5z" fill="#b5cfe6" />
          </Svg>
          <Svg w={8} h={10}>
            <path d="M1 2h5M0 4h7L3.500 8z" stroke="#222" fill="#222" strokeWidth=".6" />
          </Svg>
        </Qat>
        <Title>File PDF gộp.pdf - Foxit PhantomPDF</Title>
        <WinControls>
          <Svg w={14}>
            <path d="M1 1h4v4H1zM9 1h4v4H9zM1 9h4v4H1zM9 9h4v4H9z" stroke="#a5a5a5" />
          </Svg>
          <Svg w={14}>
            <rect x="1.500" y="4.500" width="10" height="4" rx="1" stroke="#a5a5a5" />
          </Svg>
          <Svg w={14}>
            <path d="M4 3V1h9v7h-2" stroke="#a5a5a5" />
            <rect x="1.500" y="4.500" width="9" height="7" stroke="#a5a5a5" />
          </Svg>
          <Svg w={14}>
            <path d="M2 2l10 10M12 2L2 12" stroke="#a5a5a5" strokeWidth="2.400" />
          </Svg>
        </WinControls>
      </TitleBar>

      <TabRow>
        <FileTab>FILE</FileTab>
        <HomeTab>HOME</HomeTab>
        {TABS.map(t => (
          <Tab key={t}>{t}</Tab>
        ))}
        <TabTools>
          <FindFolderIcon />
          <FindBox>
            Find
            <FindLens />
          </FindBox>
          <Slot $ml={5}>
            <GearIcon />
          </Slot>
          <Slot $ml={5}>
            <Caret />
          </Slot>
          <Slot $ml={10}>
            <Triangle dir="left" w={9} h={14} color="#f0f0f0" />
          </Slot>
          <Slot $ml={19}>
            <Triangle dir="right" w={9} h={14} color="#f0f0f0" />
          </Slot>
          <Slot $ml={14}>
            <CollapseIcon />
          </Slot>
        </TabTools>
      </TabRow>

      <Ribbon>
        <Group $w={238}>
          <GroupBody $pad={4}>
            <Big w={42} active icon={<HandIcon />}>Hand</Big>
            <Big w={42} icon={<SelectTextIcon />}>Select<br />Text</Big>
            <Big w={60} icon={<SelectAnnotIcon />}>Select<br />Annotation</Big>
            <SmallCol $ml={6}>
              <Small icon={<SnapShotIcon />} label="SnapShot" />
              <Small icon={<ClipboardIcon />} label="Clipboard" caretGap={0} />
              <Small icon={<BookmarkIcon />} label="Bookmark" />
            </SmallCol>
          </GroupBody>
          <GroupLabel>Tools</GroupLabel>
        </Group>

        <Group $w={255}>
          <GroupBody $pad={5}>
            <Big w={40} icon={<ActualSizeIcon />}>Actual<br />Size</Big>
            <SmallCol $ml={5} $w={65}>
              <Small icon={<FitIcon kind="page" />} label="Fit Page" />
              <Small icon={<FitIcon kind="width" />} label="Fit Width" />
              <Small icon={<FitIcon kind="visible" />} label="Fit Visible" />
            </SmallCol>
            <SmallCol $ml={8}>
              <SmallRow>
                <ZoomIcon sign="-" pale />
                <ZoomCombo>
                  8.33%
                  <Caret />
                </ZoomCombo>
                <ZoomIcon sign="+" />
              </SmallRow>
              <Small icon={<RotateIcon />} label="Rotate Left" />
              <Small icon={<RotateIcon flip />} label="Rotate Right" />
            </SmallCol>
          </GroupBody>
          <GroupLabel>View</GroupLabel>
        </Group>

        <Group $w={101}>
          <GroupBody $pad={2}>
            <Big w={46} icon={<EditTextIcon />}>Edit<br />Text</Big>
            <Big w={46} icon={<EditObjectIcon />}>Edit<br />Object <Caret /></Big>
          </GroupBody>
          <GroupLabel>Edit</GroupLabel>
        </Group>

        <Group $w={187}>
          <GroupBody $pad={5}>
            <Big w={60} icon={<TypewriterIcon />}>Typewriter</Big>
            <Big w={42} icon={<NoteIcon />}>Note</Big>
            <SmallCol $ml={4}>
              <Small icon={<HighlightIcon />} label="Highlight" />
              <Small icon={<StrikeoutIcon />} label="Strikeout" />
              <Small icon={<UnderlineIcon />} label="Underline" />
            </SmallCol>
          </GroupBody>
          <GroupLabel>Comment</GroupLabel>
        </Group>

        <Group $w={124}>
          <GroupBody $pad={4}>
            <Big w={46} icon={<RotatePagesIcon />}>Rotate<br />Pages<Caret $ml={2} /></Big>
            <SmallCol $ml={6}>
              <Small icon={<InsertIcon />} label="Insert" caretGap={2} />
              <Small icon={<DeleteIcon />} label="Delete" />
              <Small icon={<ExtractIcon />} label="Extract" />
            </SmallCol>
          </GroupBody>
          <GroupLabel>Page Organization</GroupLabel>
        </Group>

        <Group $w={147}>
          <GroupBody $pad={5}>
            <Big w={40} icon={<QuickScanIcon />}>Quick<br />Scan</Big>
            <Big w={42} icon={<OcrIcon />}>OCR<br /><Caret /></Big>
            <Big w={54} icon={<SuspectIcon />}>Suspect<br />Results<Caret $ml={2} /></Big>
          </GroupBody>
          <GroupLabel>Convert</GroupLabel>
        </Group>

        <Group $w={51}>
          <GroupBody $pad={1}>
            <Big w={46} icon={<PdfSignIcon />}>PDF<br />Sign <Caret /></Big>
          </GroupBody>
          <GroupLabel>Protect</GroupLabel>
        </Group>
      </Ribbon>

      <DocBand>
        <DocTab>
          <DocTabShape width="194" height="24">
            <path d="M1 24L12 4q1.500-3 5-3h159q3 0 4.500 3L193 24" fill="#f4f4f4" stroke="#b4b4b4" />
          </DocTabShape>
          <DocTabText>File PDF gộp.pdf</DocTabText>
          <DocTabText>
            <Svg w={10}>
              <path d="M1 2l8 8M9 2l-8 8" stroke="#111" strokeWidth="1.800" />
            </Svg>
          </DocTabText>
        </DocTab>
        <BandCaret>
          <Caret $s={6} />
        </BandCaret>
      </DocBand>

      <Main>
        <Rail>
          <RailItem><RailBookmark /></RailItem>
          <RailItem $active><RailPages /></RailItem>
          <RailItem><RailLayers /></RailItem>
          <RailItem><RailComments /></RailItem>
          <RailItem><RailClip /></RailItem>
          <RailItem><RailLock /></RailItem>
          <RailItem><RailDocGlobe /></RailItem>
          <RailItem><RailForm /></RailItem>
          <RailItem><RailSign /></RailItem>
        </Rail>

        <Panel>
          <PanelHeader>
            Pages
            <HeaderArrows>
              <Svg w={9} h={8}>
                <path d="M0 0l4 4-4 4zM5 0l4 4-4 4z" fill="#111" />
              </Svg>
              <TinyArrow dir="left" color="#111" s={4} />
            </HeaderArrows>
          </PanelHeader>
          <PanelToolbar>
            <DocStack><ZoomBadge sign="+" /></DocStack>
            <DocStack><ZoomBadge sign="-" /></DocStack>
            <DocStack stroke="#b5b5b5"><path d="M8 8h6l-2-2M8 12h6" stroke="#b5b5b5" strokeWidth="1.500" /></DocStack>
            <DocStack stroke="#b5b5b5"><path d="M8 10h7l-3-3v6" stroke="#b5b5b5" strokeWidth="1.500" /></DocStack>
            <DocStack><CircleBadge color={ORANGE} /></DocStack>
            <DocStack stroke="#b5b5b5"><CircleBadge color="#b5b5b5" x /></DocStack>
          </PanelToolbar>
          <PanelBody>
            <ThumbList>
              {THUMBS.map((t, i) => (
                <ThumbItem key={i}>
                  <ThumbFrame $selected={t.selected}>
                    <ThumbDrawing blobs={t.blobs} table={t.table} />
                  </ThumbFrame>
                  {t.label && <ThumbLabel>{t.label}</ThumbLabel>}
                </ThumbItem>
              ))}
            </ThumbList>
            <ScrollBar width={15} thumbTop={{ cell: 18, gap: 4 }} thumbHeight={94} bottom={3} />
          </PanelBody>
          <HScroll>
            <TinyArrow dir="left" color="#999" s={4} />
            <TinyArrow dir="right" color="#999" s={4} />
          </HScroll>
        </Panel>

        <Canvas>
          <SplitDots />
          <CursorSpot>
            <HandIcon size={17} grad="cursor" />
          </CursorSpot>
          <Sheet>
            <MainDrawing />
          </Sheet>
          <Watermark>
            <VforumLogo />
            <WatermarkText>Vforum.vn</WatermarkText>
          </Watermark>
        </Canvas>

        <ScrollBar
          width={17}
          top={
            <ScrollCell $h={10}>
              <Svg w={12} h={8}>
                <path d="M0 3.500h12M0 5.500h12" stroke="#111" />
                <path d="M4 2.500h4L6 0zM4 6.500h4L6 9z" fill="#111" />
              </Svg>
            </ScrollCell>
          }
          thumbTop={{ cell: 17, gap: 0 }}
          thumbHeight={38}
        />
      </Main>

      <StatusBar>
        <NavIcon kind="first" muted />
        <Slot $ml={11}>
          <NavIcon kind="prev" muted />
        </Slot>
        <PageCombo>
          1 / 12
          <Caret />
        </PageCombo>
        <Slot $ml={9}>
          <NavIcon kind="next" />
        </Slot>
        <Slot $ml={14}>
          <NavIcon kind="last" />
        </Slot>
        <Slot $ml={10}>
          <TableArrowIcon />
        </Slot>
        <Slot $ml={10}>
          <TableArrowIcon muted />
        </Slot>
        <StatusRight>
          <ViewModes>
            <ViewMode $active><SinglePageIcon /></ViewMode>
            <ViewMode><ContinuousIcon /></ViewMode>
            <ViewMode><FacingIcon /></ViewMode>
            <ViewMode><ContFacingIcon /></ViewMode>
          </ViewModes>
          <ZoomValue>8.33%</ZoomValue>
          <Caret />
          <Slot $ml={6}>
            <RoundSign />
          </Slot>
          <Slider>
            <SliderHandle />
            <SliderTick />
          </Slider>
          <RoundSign plus />
        </StatusRight>
      </StatusBar>
      <AccentBar />
    </Window>
  );
}
